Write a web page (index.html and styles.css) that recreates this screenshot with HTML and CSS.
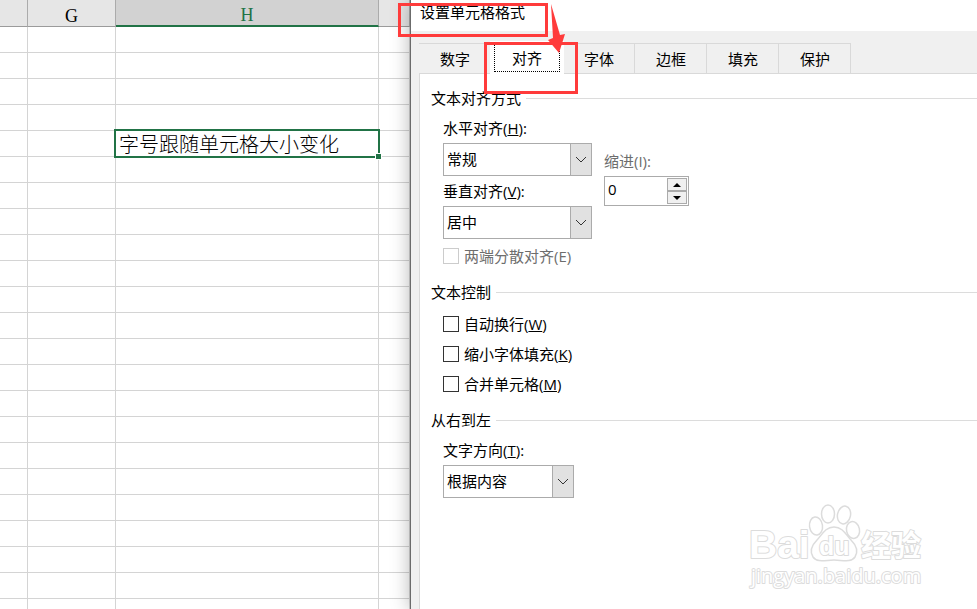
FILE: index.html
```html
<!DOCTYPE html>
<html lang="zh-CN">
  <head>
    <meta charset="UTF-8" />
    <meta name="viewport" content="width=device-width, initial-scale=1.0" />
    <title>设置单元格格式</title>
    <link rel="stylesheet" href="styles.css">
  </head>
  <body>
    <main class="sheet">
      <table class="grid">
        <colgroup>
          <col class="col-f">
          <col class="col-g">
          <col class="col-h">
          <col>
        </colgroup>
        <thead>
          <tr><th></th><th>G</th><th class="active">H</th><th></th></tr>
        </thead>
        <tbody>
          <tr><td></td><td></td><td></td><td></td></tr>
          <tr><td></td><td></td><td></td><td></td></tr>
          <tr><td></td><td></td><td></td><td></td></tr>
          <tr><td></td><td></td><td></td><td></td></tr>
          <tr><td></td><td></td><td class="selected">字号跟随单元格大小变化<span class="handle"></span></td><td></td></tr>
          <tr><td></td><td></td><td></td><td></td></tr>
          <tr><td></td><td></td><td></td><td></td></tr>
          <tr><td></td><td></td><td></td><td></td></tr>
          <tr><td></td><td></td><td></td><td></td></tr>
          <tr><td></td><td></td><td></td><td></td></tr>
          <tr><td></td><td></td><td></td><td></td></tr>
          <tr><td></td><td></td><td></td><td></td></tr>
          <tr><td></td><td></td><td></td><td></td></tr>
          <tr><td></td><td></td><td></td><td></td></tr>
          <tr><td></td><td></td><td></td><td></td></tr>
          <tr><td></td><td></td><td></td><td></td></tr>
          <tr><td></td><td></td><td></td><td></td></tr>
          <tr><td></td><td></td><td></td><td></td></tr>
          <tr><td></td><td></td><td></td><td></td></tr>
          <tr><td></td><td></td><td></td><td></td></tr>
          <tr><td></td><td></td><td></td><td></td></tr>
          <tr><td></td><td></td><td></td><td></td></tr>
          <tr><td></td><td></td><td></td><td></td></tr>
        </tbody>
      </table>
    </main>

    <section class="dialog" role="dialog" aria-labelledby="dialog-title">
      <h1 class="dialog-title" id="dialog-title">设置单元格格式</h1>

      <div class="tabs" role="tablist">
        <button class="tab" role="tab">数字</button>
        <button class="tab current" role="tab" aria-selected="true"><span class="focus">对齐</span></button>
        <button class="tab" role="tab">字体</button>
        <button class="tab" role="tab">边框</button>
        <button class="tab" role="tab">填充</button>
        <button class="tab" role="tab">保护</button>
      </div>

      <form class="panel">
        <h2 class="group-title">文本对齐方式</h2>
        <div class="group columns">
          <div class="column">
            <label for="horizontal">水平对齐(<u>H</u>):</label>
            <div class="dropdown">
              <select id="horizontal"><option>常规</option></select>
              <svg class="chevron" viewBox="0 0 20 31"><path d="M5 13l5 5 5-5"/></svg>
            </div>
            <label for="vertical">垂直对齐(<u>V</u>):</label>
            <div class="dropdown">
              <select id="vertical"><option>居中</option></select>
              <svg class="chevron" viewBox="0 0 20 31"><path d="M5 13l5 5 5-5"/></svg>
            </div>
            <label class="check muted"><input type="checkbox" disabled>两端分散对齐(E)</label>
          </div>
          <div class="column indent">
            <label class="muted" for="indent">缩进(I):</label>
            <div class="spinner">
              <input id="indent" type="text" value="0">
              <div class="spin-buttons">
                <button type="button" aria-label="增加"><svg viewBox="0 0 8 4"><path d="M0 4l4-4 4 4z"/></svg></button>
                <button type="button" aria-label="减少"><svg viewBox="0 0 8 4"><path d="M0 0l4 4 4-4z"/></svg></button>
              </div>
            </div>
          </div>
        </div>

        <h2 class="group-title">文本控制</h2>
        <div class="group checks">
          <label class="check"><input type="checkbox"><span>自动换行(<u>W</u>)</span></label>
          <label class="check"><input type="checkbox"><span>缩小字体填充(<u>K</u>)</span></label>
          <label class="check"><input type="checkbox"><span>合并单元格(<u>M</u>)</span></label>
        </div>

        <h2 class="group-title">从右到左</h2>
        <div class="group">
          <label for="direction">文字方向(<u>T</u>):</label>
          <div class="dropdown narrow">
            <select id="direction"><option>根据内容</option></select>
            <svg class="chevron" viewBox="0 0 20 31"><path d="M5 13l5 5 5-5"/></svg>
          </div>
        </div>
      </form>
    </section>

    <!-- red marks -->
    <div class="mark mark-title"></div>
    <div class="mark mark-tab"></div>
    <svg class="arrow" viewBox="0 0 20 50"><path d="M2 0L11 31l5-1-6 19-11-13 5-2z"/></svg>

    <!-- watermark -->
    <svg class="watermark" viewBox="0 0 190 90">
      <g>
        <ellipse cx="71" cy="26" rx="6.500" ry="9" transform="rotate(-8 71 26)"/>
        <ellipse cx="83" cy="14" rx="6.500" ry="9"/>
        <ellipse cx="99" cy="15" rx="6.500" ry="9" transform="rotate(12 99 15)"/>
        <ellipse cx="108" cy="30" rx="6.500" ry="8.500" transform="rotate(-12 108 30)"/>
        <path d="M89 27c9 0 12 8 17 13 6 6 7 12 4 17-4 6-13 3-21 3s-17 3-21-3c-3-5-2-11 4-17 5-5 8-13 17-13z"/>
      </g>
      <text class="wm-logo" x="4" y="58">Bai</text>
      <text class="wm-du" x="74" y="55">du</text>
      <text class="wm-cjk" x="116" y="56">经验</text>
      <text class="wm-url" x="6" y="83">jingyan.baidu.com</text>
    </svg>
  </body>
</html>
```
FILE: styles.css
```css
* {
  box-sizing: border-box;
}

body {
  display: flex;
  position: relative;
  height: 100vh;
  margin: 0;
  overflow: hidden;
  background: #fff;
  color: #000;
  font: 15px/20px "Open Sans", "Noto Sans CJK SC", sans-serif;
}

/* spreadsheet */
.sheet {
  flex: 0 0 410px;
  overflow: hidden;
}

.grid {
  width: 100%;
  table-layout: fixed;
  border-collapse: separate;
  border-spacing: 0;
}

.col-f {
  width: 28px;
}

.col-g {
  width: 88px;
}

.col-h {
  width: 263px;
}

.grid th {
  height: 27px;
  padding: 5px 0 0;
  background: #e6e6e6;
  border-right: 1px solid #ababab;
  border-bottom: 1px solid #9b9b9b;
  font: 18px/20px "Liberation Serif", serif;
}

.grid th.active {
  background: #d2d2d2;
  border-bottom: 2px solid #217346;
  color: #217346;
}

.grid td {
  height: 26px;
  padding: 0;
  border-right: 1px solid #d4d4d4;
  border-bottom: 1px solid #d4d4d4;
}

.grid td.selected {
  position: relative;
  padding-left: 3px;
  font: 300 20px/24px "Noto Sans CJK SC", sans-serif;
}

.selected::before {
  content: "";
  position: absolute;
  inset: -2px;
  border: 2px solid #217346;
}

.handle {
  position: absolute;
  right: -4px;
  bottom: -4px;
  width: 7px;
  height: 7px;
  background: #217346;
  border: 1px solid #fff;
}

/* dialog */
.dialog {
  flex: 1;
  display: flex;
  flex-direction: column;
  background: #f0f0f0;
  border-left: 1px solid #6b6b6b;
  box-shadow: 0 0 18px rgba(0, 0, 0, 0.3);
}

.dialog-title {
  height: 31px;
  margin: 0;
  padding: 2px 9px;
  background: #fff;
  font-size: 15px;
  font-weight: normal;
}

.tabs {
  display: flex;
  align-items: flex-end;
  padding: 10px 0 0 8px;
}

.tab {
  height: 30px;
  padding: 0 20px 0 21px;
  background: #f0f0f0;
  border: solid #d9d9d9;
  border-width: 1px 1px 0 0;
  color: #000;
  font: inherit;
}

.tab.current {
  position: relative;
  height: 33px;
  margin: 0 -1px -1px;
  padding: 0 4px;
  background: #fff;
  border: 0;
}

.focus {
  display: block;
  padding: 3px 17px;
  border: 1px dotted #000;
}

.panel {
  flex: 1;
  margin-left: 8px;
  padding: 14px 0 0 11px;
  background: #fff;
  border: solid #d9d9d9;
  border-width: 1px 0 0 1px;
}

.group-title {
  display: flex;
  align-items: center;
  gap: 5px;
  margin: 0;
  font-size: 15px;
  font-weight: normal;
}

.group-title::after {
  content: "";
  flex: 1;
  height: 1px;
  background: #dcdcdc;
}

.group {
  padding: 10px 0 16px 12px;
}

.group label {
  display: block;
}

.columns {
  display: flex;
  gap: 12px;
}

.indent {
  padding-top: 33px;
}

.muted {
  color: #6d6d6d;
}

.dropdown {
  display: grid;
  width: 149px;
  height: 33px;
  margin: 5px 0;
}

.dropdown.narrow {
  width: 131px;
}

.dropdown select,
.chevron {
  grid-area: 1 / 1;
}

.dropdown select {
  appearance: none;
  padding: 0 24px 2px 3px;
  background: #fff;
  border: 1px solid #ababab;
  border-radius: 0;
  color: #000;
  font: inherit;
}

.chevron {
  justify-self: end;
  width: 22px;
  height: 33px;
  background: #e1e1e1;
  border: 1px solid #ababab;
  fill: none;
  stroke: #333;
  pointer-events: none;
}

.spinner {
  display: flex;
  width: 85px;
  height: 30px;
  margin-top: 5px;
  padding: 1px;
  border: 1px solid #ababab;
}

.spinner input {
  flex: 1;
  min-width: 0;
  padding: 0 2px 4px;
  border: 0;
  font: inherit;
}

.spin-buttons {
  display: flex;
  flex-direction: column;
  width: 20px;
}

.spin-buttons button {
  display: flex;
  flex: 1;
  align-items: center;
  justify-content: center;
  padding: 0;
  background: #f0f0f0;
  border: 1px solid #ababab;
}

.spin-buttons svg {
  width: 8px;
  height: 4px;
}

.group .check {
  display: flex;
  align-items: center;
  gap: 5px;
}

.column .check {
  margin-top: 7px;
}

.checks {
  display: flex;
  flex-direction: column;
  gap: 10px;
  padding-top: 12px;
}

.check input {
  appearance: none;
  width: 16px;
  height: 16px;
  margin: 0;
  background: #fff;
  border: 1px solid #333;
}

.check input:disabled {
  border-color: #ccc;
}

/* red marks */
.mark {
  position: absolute;
  border: 3px solid #ff3b3b;
}

.mark-title {
  left: 398px;
  top: 3px;
  width: 150px;
  height: 34px;
}

.mark-tab {
  left: 484px;
  top: 42px;
  width: 94px;
  height: 52px;
}

.arrow {
  position: absolute;
  left: 549px;
  top: 4px;
  width: 20px;
  height: 50px;
  overflow: visible;
  fill: #ff3b3b;
}

/* watermark */
.watermark {
  position: absolute;
  left: 745px;
  top: 500px;
  width: 190px;
  height: 90px;
  fill: #fff;
  stroke: #dcdcdc;
  stroke-width: 1.5px;
  stroke-linejoin: round;
}

.watermark text {
  paint-order: stroke;
  stroke-width: 2px;
}

.wm-logo {
  font: bold 39px "Liberation Sans", sans-serif;
}

.wm-du {
  font: bold 25px "Liberation Sans", sans-serif;
}

.wm-cjk {
  font: bold 30px "Noto Sans CJK SC", sans-serif;
}

.wm-url {
  font: 20px "Open Sans", sans-serif;
}
```
